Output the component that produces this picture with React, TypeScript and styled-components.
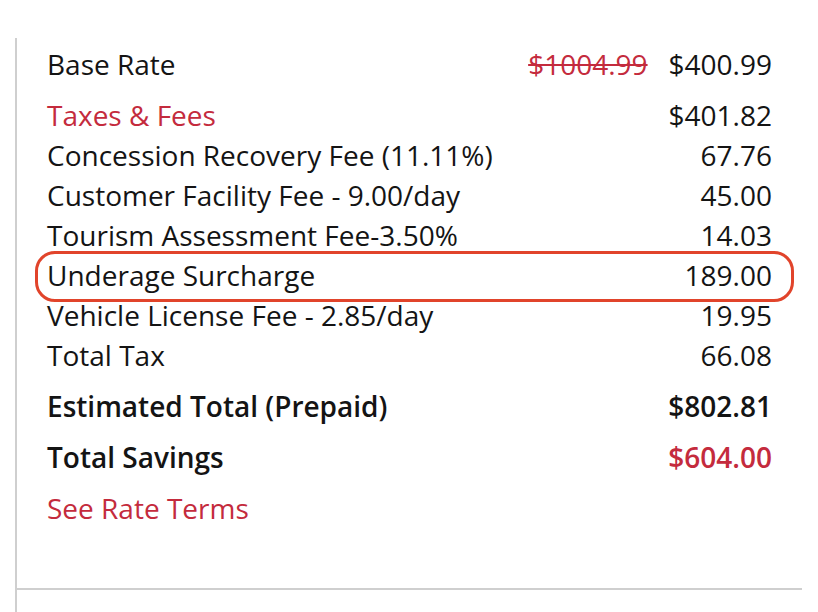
import React from "react";
import styled, { createGlobalStyle } from "styled-components";

const Global = createGlobalStyle`
  html, body { margin: 0; padding: 0; background: #ffffff; }
  body { font-family: "Open Sans", "Liberation Sans", sans-serif; }
`;

const RED = "#c42b3d";

const Page = styled.div`
  width: 818px;
  height: 612px;
  overflow: hidden;
  padding-top: 38px;
  box-sizing: border-box;
`;

const Panel = styled.section`
  margin-left: 15px;
  width: 787px;
  height: 574px;
  border-left: 2px solid #cfcfcf;
  box-sizing: border-box;
  display: flex;
  flex-direction: column;
`;

const Summary = styled.div`
  padding: 6px 30px 0 30px;
  height: 550px;
  box-sizing: border-box;
  display: flex;
  flex-direction: column;
  gap: 11px;
`;

const Group = styled.div`
  display: flex;
  flex-direction: column;
`;

const Row = styled.div<{ $bold?: boolean; $highlight?: boolean }>`
  position: relative;
  display: flex;
  justify-content: space-between;
  align-items: baseline;
  font-size: 28px;
  line-height: 40px;
  color: #141414;
  font-weight: ${(p) => (p.$bold ? 600 : 400)};

  ${(p) =>
    p.$highlight &&
    `
    &::after {
      content: "";
      position: absolute;
      top: -4px;
      bottom: -7px;
      left: -12px;
      right: -22px;
      border: 3px solid #e1442b;
      border-radius: 20px;
      pointer-events: none;
    }
  `}
`;

const Label = styled.span<{ $red?: boolean }>`
  color: ${(p) => (p.$red ? RED : "inherit")};
`;

const Amounts = styled.span`
  display: flex;
  gap: 21px;
  align-items: baseline;
`;

const Value = styled.span<{ $red?: boolean }>`
  color: ${(p) => (p.$red ? RED : "inherit")};
`;

const Struck = styled.span`
  color: ${RED};
  text-decoration: line-through;
  text-decoration-thickness: 2px;
`;

const Link = styled.a`
  font-size: 28px;
  line-height: 40px;
  color: ${RED};
  text-decoration: none;
  cursor: pointer;
`;

const Footer = styled.div`
  border-top: 2px solid #cfcfcf;
  flex: 1;
`;

const fees: [string, string, boolean?][] = [
  ["Concession Recovery Fee (11.11%)", "67.76"],
  ["Customer Facility Fee - 9.00/day", "45.00"],
  ["Tourism Assessment Fee-3.50%", "14.03"],
  ["Underage Surcharge", "189.00", true],
  ["Vehicle License Fee - 2.85/day", "19.95"],
  ["Total Tax", "66.08"],
];

export default function App() {
  return (
    <>
      <Global />
      <Page>
        <Panel>
          <Summary>
            <Group>
              <Row>
                <Label>Base Rate</Label>
                <Amounts>
                  <Struck>$1004.99</Struck>
                  <Value>$400.99</Value>
                </Amounts>
              </Row>
            </Group>
            <Group>
              <Row>
                <Label $red>Taxes &amp; Fees</Label>
                <Value>$401.82</Value>
              </Row>
              {fees.map(([label, value, hl]) => (
                <Row key={label} $highlight={hl}>
                  <Label>{label}</Label>
                  <Value>{value}</Value>
                </Row>
              ))}
            </Group>
            <Row $bold>
              <Label>Estimated Total (Prepaid)</Label>
              <Value>$802.81</Value>
            </Row>
            <Row $bold>
              <Label>Total Savings</Label>
              <Value $red>$604.00</Value>
            </Row>
            <Link>See Rate Terms</Link>
          </Summary>
          <Footer />
        </Panel>
      </Page>
    </>
  );
}
